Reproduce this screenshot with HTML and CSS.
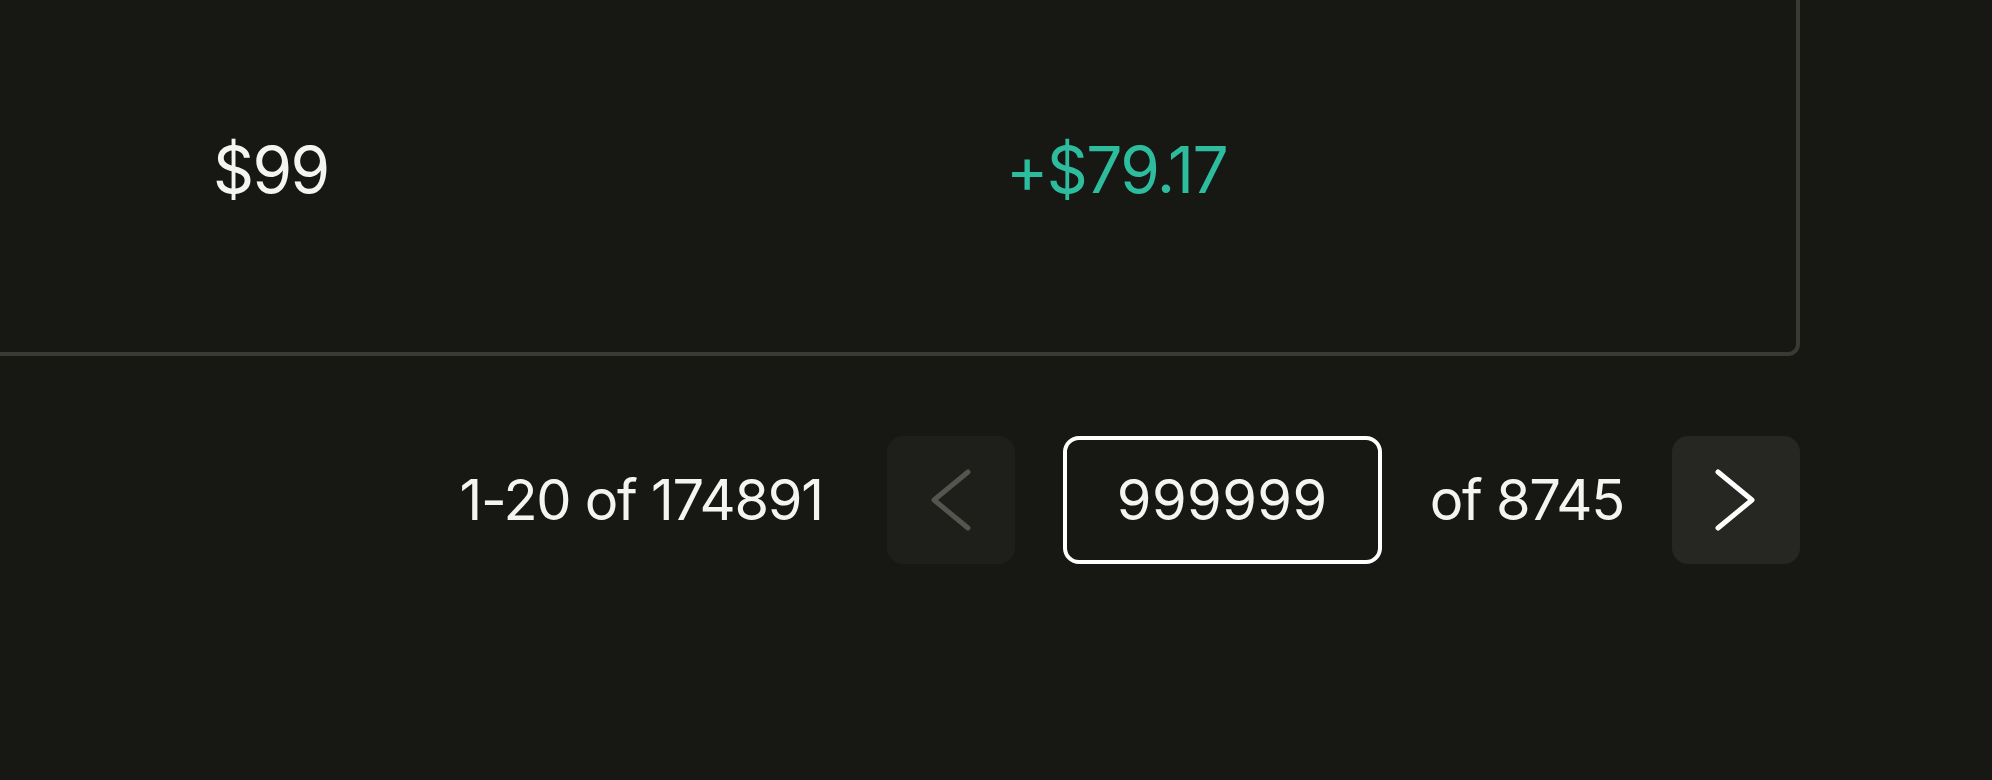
FILE: index.html
```html
<!DOCTYPE html>
<html lang="en">
<head>
<meta charset="utf-8">
<title>Transactions</title>
<link rel="stylesheet" href="styles.css">
</head>
<body>
<main class="page">
  <section class="table-card">
    <div class="table-row">
      <div class="cell">$99</div>
      <div class="cell cell-positive">+$79.17</div>
    </div>
  </section>
  <nav class="pagination">
    <span class="range">1-20 of 174891</span>
    <button class="page-btn page-btn-disabled" type="button" aria-label="Previous page">
      <svg viewBox="0 0 128 128" width="128" height="128"><path d="M81 36 L47 64 L81 92" fill="none" stroke="currentColor" stroke-width="5" stroke-linecap="round" stroke-linejoin="round"/></svg>
    </button>
    <input class="page-input" type="text" value="999999" aria-label="Page">
    <span class="total">of 8745</span>
    <button class="page-btn" type="button" aria-label="Next page">
      <svg viewBox="0 0 128 128" width="128" height="128"><path d="M46 36 L80 64 L46 92" fill="none" stroke="currentColor" stroke-width="5" stroke-linecap="round" stroke-linejoin="round"/></svg>
    </button>
  </nav>
</main>
</body>
</html>
```

FILE: styles.css
```css
html, body {
  margin: 0;
  padding: 0;
  background: #171713;
  height: 100%;
  overflow: hidden;
}

body {
  font-family: Inter, "Liberation Sans", sans-serif;
  color: #f4f4f0;
}

.page {
  display: flex;
  flex-direction: column;
  padding-right: 192px;
}

.table-card {
  margin-top: -40px;
  margin-left: -40px;
  border: 4px solid #3a3a35;
  border-radius: 12px;
  background: #171713;
  padding: 174px 0 150px;
}

.table-row {
  display: grid;
  grid-template-columns: 793px 1fr;
  padding-left: 249px;
}

.cell {
  font-size: 64px;
  line-height: 64px;
  font-weight: 400;
  letter-spacing: -1.6px;
}

.cell-positive {
  color: #2dbd9e;
}

.pagination {
  margin-top: 80px;
  height: 128px;
  display: flex;
  justify-content: flex-end;
  align-items: center;
  gap: 48px;
  font-size: 56px;
  line-height: 56px;
}

.range,
.total {
  letter-spacing: -1.3px;
}

.range {
  margin-right: 16px;
}

.page-btn {
  width: 128px;
  height: 128px;
  padding: 0;
  border: 0;
  border-radius: 16px;
  background: #262622;
  color: #ffffff;
  display: flex;
  align-items: center;
  justify-content: center;
}

.page-btn svg {
  display: block;
}

.page-btn-disabled {
  background: #1e1e1b;
  color: #55554f;
}

.page-input {
  box-sizing: border-box;
  width: 319px;
  height: 128px;
  border: 4px solid #ffffff;
  border-radius: 16px;
  background: transparent;
  color: #f4f4f0;
  font-family: inherit;
  font-size: 56px;
  letter-spacing: 0.4px;
  text-align: center;
  padding: 0;
  outline: none;
}
```
